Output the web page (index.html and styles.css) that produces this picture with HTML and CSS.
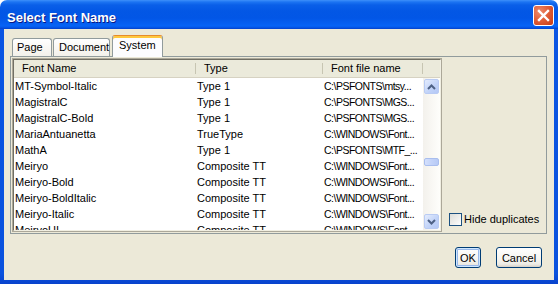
FILE: index.html
```html
<!DOCTYPE html>
<html>
<head>
<meta charset="utf-8">
<link rel="stylesheet" href="styles.css">
</head>
<body>
<div class="window">
  <div class="titlebar">
    <span class="title">Select Font Name</span>
    <span class="close">
      <svg width="21" height="21" viewBox="0 0 21 21"><path d="M6 6 L15 15 M15 6 L6 15" stroke="#fff" stroke-width="2.4" stroke-linecap="square" fill="none"/></svg>
    </span>
  </div>
  <div class="frame">
    <div class="client">
      <div class="tabs">
        <div class="tab tab-page">Page</div>
        <div class="tab tab-doc">Document</div>
        <div class="tab tab-sys selected">System</div>
      </div>
      <div class="pane">
        <div class="list">
          <div class="list-inner">
            <div class="thead">
              <div class="th c1">Font Name</div>
              <div class="th c2">Type</div>
              <div class="th c3">Font file name</div>
              <div class="th c4"></div>
            </div>
            <div class="tbody">
              <div class="rows">
                <div class="row"><span class="c1">MT-Symbol-Italic</span><span class="c2">Type 1</span><span class="c3">C:\PSFONTS\mtsy...</span></div>
                <div class="row"><span class="c1">MagistralC</span><span class="c2">Type 1</span><span class="c3">C:\PSFONTS\MGS...</span></div>
                <div class="row"><span class="c1">MagistralC-Bold</span><span class="c2">Type 1</span><span class="c3">C:\PSFONTS\MGS...</span></div>
                <div class="row"><span class="c1">MariaAntuanetta</span><span class="c2">TrueType</span><span class="c3">C:\WINDOWS\Font...</span></div>
                <div class="row"><span class="c1">MathA</span><span class="c2">Type 1</span><span class="c3">C:\PSFONTS\MTF_...</span></div>
                <div class="row"><span class="c1">Meiryo</span><span class="c2">Composite TT</span><span class="c3">C:\WINDOWS\Font...</span></div>
                <div class="row"><span class="c1">Meiryo-Bold</span><span class="c2">Composite TT</span><span class="c3">C:\WINDOWS\Font...</span></div>
                <div class="row"><span class="c1">Meiryo-BoldItalic</span><span class="c2">Composite TT</span><span class="c3">C:\WINDOWS\Font...</span></div>
                <div class="row"><span class="c1">Meiryo-Italic</span><span class="c2">Composite TT</span><span class="c3">C:\WINDOWS\Font...</span></div>
                <div class="row"><span class="c1">MeiryoUI</span><span class="c2">Composite TT</span><span class="c3">C:\WINDOWS\Font...</span></div>
              </div>
              <div class="scrollbar">
                <div class="sb-btn">
                  <svg width="9" height="6" viewBox="0 0 9 6"><path d="M1 5 L4.5 1.5 L8 5" stroke="#4D6185" stroke-width="2" fill="none"/></svg>
                </div>
                <div class="sb-track"><div class="sb-thumb"></div></div>
                <div class="sb-btn">
                  <svg width="9" height="6" viewBox="0 0 9 6"><path d="M1 1 L4.5 4.5 L8 1" stroke="#4D6185" stroke-width="2" fill="none"/></svg>
                </div>
              </div>
            </div>
          </div>
        </div>
        <div class="side">
          <label class="check"><span class="box"></span><span>Hide duplicates</span></label>
        </div>
      </div>
      <div class="buttons">
        <div class="btn btn-ok default">OK</div>
        <div class="btn btn-cancel">Cancel</div>
      </div>
    </div>
  </div>
</div>
</body>
</html>
```

FILE: styles.css
```css
html, body {
  margin: 0;
  padding: 0;
  background: #ffffff;
}
body {
  font-family: "Liberation Sans", Arial, sans-serif;
  font-size: 11px;
  color: #000;
}
.window {
  width: 558px;
  height: 284px;
  display: flex;
  flex-direction: column;
}
.titlebar {
  height: 29px;
  flex: none;
  display: flex;
  align-items: flex-start;
  justify-content: space-between;
  padding: 5px 4px 0 7px;
  box-sizing: border-box;
  border-radius: 7px 7px 0 0;
  background: linear-gradient(to bottom, #3E90FA 0px, #1C74F2 2px, #0A5FE8 5px, #0357E5 11px, #0256E6 18px, #0560F2 24px, #0664F6 26px, #0450E0 28px, #0340C8 29px);
}
.title {
  color: #fff;
  font-weight: bold;
  font-size: 13px;
  line-height: 13px;
  margin-top: 6px;
  text-shadow: 1px 1px 0 #0A1883;
}
.close {
  width: 21px;
  height: 21px;
  box-sizing: border-box;
  border: 1px solid #fff;
  border-radius: 3px;
  background: radial-gradient(circle at 30% 30%, #EC8B6C 0%, #E1603A 45%, #C83A12 100%);
  display: flex;
  align-items: center;
  justify-content: center;
}
.close svg {
  margin: -1px;
}
.frame {
  flex: 1;
  display: flex;
  padding: 0 4px 4px 4px;
  background: linear-gradient(to bottom, #0A55E3 0%, #0A52DE 96%, #0842CC 100%);
}
.client {
  flex: 1;
  background: #ECE9D8;
  display: flex;
  flex-direction: column;
}
.tabs {
  height: 21px;
  display: flex;
  align-items: flex-end;
  margin: 6px 0 0 8px;
}
.tab {
  height: 18px;
  box-sizing: border-box;
  border: 1px solid #919B9C;
  border-bottom: none;
  border-radius: 3px 3px 0 0;
  background: linear-gradient(to bottom, #FFFFFF, #F3F1EA);
  line-height: 16px;
  white-space: nowrap;
}
.tab-page {
  width: 40px;
  padding-left: 4px;
}
.tab-doc {
  width: 57px;
  margin-left: 1px;
  padding-left: 5px;
}
.tab-sys {
  width: 51px;
  margin-left: 2px;
  padding-left: 6px;
}
.tab.selected {
  height: 22px;
  margin-bottom: -1px;
  position: relative;
  z-index: 1;
  background: #FCFCFE;
  border-top: 1px solid #E68B2C;
  box-shadow: inset 0 2px 0 #FFC83C;
  line-height: 18px;
}
.pane {
  height: 178px;
  box-sizing: border-box;
  margin: 0 7px 0 6px;
  border: 1px solid #919B9C;
  padding: 1px;
  display: flex;
}
.list {
  width: 430px;
  box-sizing: border-box;
  border: 1px solid #ACA899;
  display: flex;
}
.list-inner {
  flex: 1;
  border-top: 1px solid #716F64;
  border-left: 1px solid #716F64;
  border-right: 1px solid #F1EFE2;
  border-bottom: 1px solid #F1EFE2;
  display: flex;
  flex-direction: column;
  background: #fff;
}
.thead {
  height: 18px;
  display: flex;
  background: #EBEADB;
  border-bottom: 1px solid #D6D2C2;
  box-sizing: border-box;
}
.th {
  line-height: 17px;
  padding-left: 8px;
  box-sizing: border-box;
  white-space: nowrap;
  background: linear-gradient(#C7C5B2, #C7C5B2) right 0 top 3px / 1px 11px no-repeat;
}
.thead .c1 { width: 182px; }
.thead .c2 { width: 127px; }
.thead .c3 { width: 100px; }
.thead .c4 { flex: 1; background: none; }
.tbody {
  flex: 1;
  display: flex;
  overflow: hidden;
}
.rows {
  width: 409px;
  overflow: hidden;
}
.row {
  display: grid;
  grid-template-columns: 182px 127px 100px;
  height: 16px;
  line-height: 16px;
}
.row span {
  white-space: nowrap;
  overflow: hidden;
}
.row .c1 { padding-left: 1px; }
.row .c2 { padding-left: 1px; }
.row .c3 {
  padding-left: 1px;
  font-size: 10.5px;
  letter-spacing: -0.5px;
}
.scrollbar {
  width: 17px;
  display: flex;
  flex-direction: column;
  background: linear-gradient(to right, #F3F1EC, #FEFEFB);
}
.sb-btn {
  height: 15px;
  margin: 1px;
  box-sizing: border-box;
  border: 1px solid #B9CBF3;
  border-radius: 2px;
  background: linear-gradient(to bottom right, #E4ECFD, #C0D2F8 60%, #B4C8F6);
  display: flex;
  align-items: center;
  justify-content: center;
}
.sb-track {
  flex: 1;
}
.sb-thumb {
  height: 8px;
  margin: 63px 1px 0 1px;
  box-sizing: border-box;
  border: 1px solid #A9BEEE;
  border-radius: 2px;
  background: linear-gradient(to right, #D4E0FC, #C3D3F9 50%, #B7CAF5);
}
.side {
  flex: 1;
  display: flex;
  align-items: flex-end;
  padding: 0 0 6px 7px;
}
.check {
  display: flex;
  align-items: center;
  gap: 2px;
  line-height: 13px;
  white-space: nowrap;
}
.box {
  width: 13px;
  height: 13px;
  box-sizing: border-box;
  border: 1px solid #1C5180;
  background: linear-gradient(to bottom right, #DCDCD7, #F4F4F2 70%, #FFFFFF);
}
.buttons {
  display: flex;
  justify-content: flex-end;
  gap: 15px;
  margin: 13px 12px 0 0;
}
.btn {
  height: 21px;
  box-sizing: border-box;
  border: 1px solid #003C74;
  border-radius: 3px;
  background: linear-gradient(to bottom, #FFFFFF 0%, #F5F4EF 60%, #ECEBE5 85%, #D6D0C5 100%);
  display: flex;
  align-items: center;
  justify-content: center;
}
.btn-ok { width: 26px; }
.btn-cancel { width: 46px; }
.btn.default {
  box-shadow: inset 0 0 0 1px #CEE7FF, inset 0 0 0 2px #98B8EA;
}
```
